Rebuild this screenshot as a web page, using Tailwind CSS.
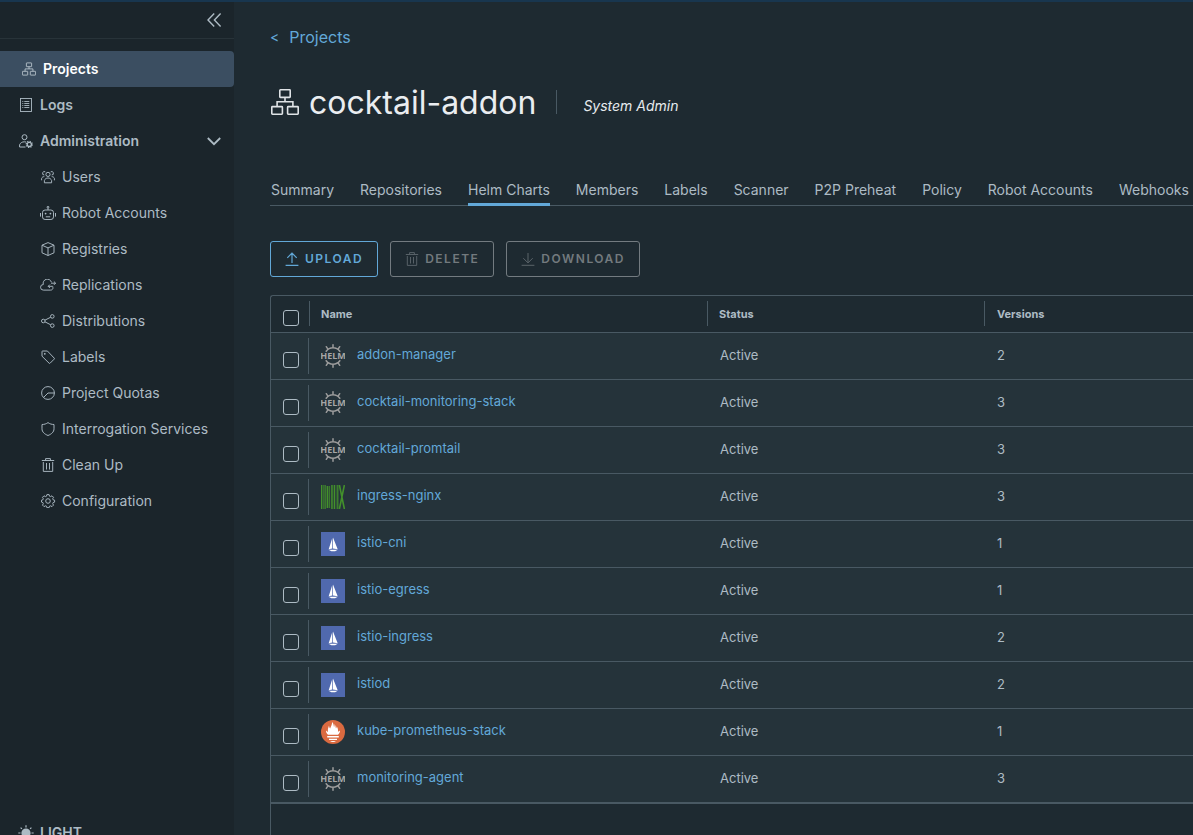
<!DOCTYPE html>
<html lang="en">
<head>
<meta charset="utf-8">
<title>cocktail-addon - Helm Charts</title>
<script src="https://cdn.jsdelivr.net/npm/@tailwindcss/browser@4"></script>
</head>
<body class="h-screen overflow-hidden bg-[#1e2a31] font-[Inter,sans-serif] text-sm text-[#adbbc4]">
<svg class="hidden" aria-hidden="true">
  <symbol id="org" viewBox="0 0 28 26"><g fill="none" stroke="currentColor" stroke-width="1.6"><rect x="8.8" y="0.8" width="10.4" height="7.6" rx=".6"/><rect x=".8" y="17.6" width="10.6" height="7.6" rx=".6"/><rect x="16.6" y="17.6" width="10.6" height="7.6" rx=".6"/><path d="M14 8.4v4.4M6.1 17.6v-4.8h15.8v4.8"/></g></symbol>
  <symbol id="logs" viewBox="0 0 14 14"><g fill="none" stroke="currentColor" stroke-width=".9"><rect x="1.5" y=".5" width="11" height="13"/><path d="M5.3 3.5h5M5.3 5.5h5M5.3 7.5h5M5.3 9.5h5M3.3 3.5h1M3.3 5.5h1M3.3 7.5h1M3.3 9.5h1"/></g></symbol>
  <symbol id="admin" viewBox="0 0 14 14"><g fill="none" stroke="currentColor"><circle cx="5.5" cy="3.2" r="2.5"/><path d="M6.5 13H.6v-2.2C1.4 8.9 3 7.8 5.4 7.8c.7 0 1.3.1 1.9.3"/><circle cx="10.3" cy="10.4" r="2.1" stroke-width="1.3"/><circle cx="10.3" cy="10.4" r="3.1" stroke-width="1.2" stroke-dasharray="1.2 1.23"/></g></symbol>
  <symbol id="users" viewBox="0 0 14 14"><g fill="none" stroke="currentColor" stroke-width=".95"><circle cx="7" cy="4.4" r="2.1"/><path d="M3.4 12.8v-2.3c.5-1.5 1.8-2.5 3.6-2.5s3.100 1 3.600 2.500v2.300z"/><path d="M4.300 1.900A1.700 1.700 0 1 0 3.300 5M9.700 1.900A1.700 1.700 0 1 1 10.700 5M.6 10.300V8.400c.3-1 1.200-1.700 2.700-1.800M13.400 10.300V8.400c-.3-1-1.200-1.700-2.700-1.800"/></g></symbol>
  <symbol id="robot" viewBox="0 0 16 14"><g fill="none" stroke="currentColor" stroke-width=".95"><rect x="2.500" y="4" width="11" height="9.500" rx="2.600"/><circle cx="8" cy="1.200" r=".9"/><path d="M8 2.100V4M.5 7v3.600M15.500 7v3.600M5.800 10.800h4.400"/></g><g fill="currentColor"><circle cx="5.600" cy="7.600" r=".9"/><circle cx="10.400" cy="7.600" r=".9"/></g></symbol>
  <symbol id="cube" viewBox="0 0 14 14"><path d="M7 .6l6 2.600v7.600l-6 2.700-6-2.700V3.200zM1 3.200l6 2.700 6-2.700M7 5.900v7.600" fill="none" stroke="currentColor" stroke-width=".95" stroke-linejoin="round"/></symbol>
  <symbol id="cloud" viewBox="0 0 16 12"><path d="M12.900 7.600v.9a2.200 2.200 0 0 1-2.300 2.600H3.400A2.800 2.800 0 0 1 3.300 5.500 4.200 4.200 0 0 1 11.400 3.200M15.600 4.200h-4.600M13.900 2.500l1.700 1.700-1.700 1.700M12.800 7.300H8.200M9.900 5.600L8.200 7.300l1.700 1.700" fill="none" stroke="currentColor" stroke-width=".95"/></symbol>
  <symbol id="share" viewBox="0 0 14 14"><g fill="none" stroke="currentColor" stroke-width=".95"><circle cx="2.300" cy="7" r="1.800"/><circle cx="11.300" cy="2.400" r="1.800"/><circle cx="11.300" cy="11.600" r="1.800"/><path d="M3.900 6.200l5.800-3M3.900 7.800l5.800 3"/></g></symbol>
  <symbol id="tag" viewBox="0 0 14 14"><path d="M1 1.600v4.600l7 6.900a.8.8 0 0 0 1.200 0l3.900-3.900a.8.8 0 0 0 0-1.200L6.400 1H1.600a.6.6 0 0 0-.6.600z" fill="none" stroke="currentColor" stroke-width=".95"/><circle cx="3.800" cy="3.800" r=".9" fill="currentColor"/></symbol>
  <symbol id="quota" viewBox="0 0 14 14"><g fill="none" stroke="currentColor" stroke-width=".95"><circle cx="7" cy="7" r="6.400"/><path d="M2.500 11.500L7 7h6.400"/></g></symbol>
  <symbol id="shield" viewBox="0 0 14 14"><path d="M7 .6c1.800 1.300 3.700 1.900 6 1.900v4.300c0 3.200-2.500 5.300-6 6.700-3.500-1.400-6-3.500-6-6.700V2.500c2.300 0 4.200-.6 6-1.900z" fill="none" stroke="currentColor" stroke-width=".95"/></symbol>
  <symbol id="trash" viewBox="0 0 14 14"><path d="M.8 2.500h12.400M4.600 2.300V.6h4.800v1.700M2.300 4v9.400h9.400V4M5.500 5v6.500M8.500 5v6.500" fill="none" stroke="currentColor" stroke-width=".95"/></symbol>
  <symbol id="gear" viewBox="0 0 14 14"><g fill="none" stroke="currentColor" stroke-width=".95"><circle cx="7" cy="7" r="2.300"/><path d="M5.900 .6h2.200l.4 1.600 1.100.4 1.400-.8 1.500 1.500-.8 1.400.4 1.100 1.500.4v1.900l-1.500.5-.4 1.100.8 1.400-1.500 1.500-1.400-.8-1.100.4-.4 1.500H5.900l-.4-1.500-1.100-.4-1.400.8-1.500-1.500.8-1.400-.4-1.100L.5 8.100V6.200l1.400-.4.400-1.100-.8-1.400L3 1.800l1.400.8 1.100-.4z" stroke-linejoin="round"/></g></symbol>
  <symbol id="sun" viewBox="0 0 16 16"><circle cx="8" cy="8" r="4.600" fill="currentColor"/><path d="M8 .3v2.200M8 13.500v2.200M.3 8h2.200M13.500 8h2.200M2.600 2.600l1.300 1.300M12.100 12.100l1.300 1.300M2.600 13.400l1.300-1.300M12.100 3.900l1.300-1.300" stroke="currentColor" stroke-width="1.200"/></symbol>
  <symbol id="up" viewBox="0 0 14 14"><path d="M7 11V1.200M2.300 5.800L7 1.100l4.700 4.700M.6 13.300h12.800" fill="none" stroke="currentColor" stroke-width="1.200"/></symbol>
  <symbol id="down" viewBox="0 0 14 14"><path d="M7 1v9.800M2.300 6.200L7 10.900l4.700-4.700M.6 13.300h12.800" fill="none" stroke="currentColor" stroke-width="1"/></symbol>
  <symbol id="helm" viewBox="0 0 24 24"><g fill="none" stroke="#9c9c9c" stroke-width="1.500" stroke-linecap="round"><path d="M5.200 7.300a8.400 8.400 0 0 1 13.600 0M5.200 16.700a8.400 8.400 0 0 0 13.600 0M12 3.600V.8M12 20.400v2.800M6.900 5.100L5.300 2.700M17.100 5.100l1.600-2.400M6.900 18.900l-1.600 2.400M17.100 18.900l1.600 2.400"/></g><text x="12" y="15.200" text-anchor="middle" font-family="Open Sans" font-weight="700" font-size="9" fill="#a6a6a6">HELM</text></symbol>
  <symbol id="nginx" viewBox="0 0 24 24"><g fill="#43912b"><rect width="1.400" height="24"/><rect x="2" width="1" height="24" opacity=".6"/><rect x="3.500" width="1.200" height="24"/><rect x="5.600" y="1" width="1.500" height="22"/><rect x="7.600" y="1" width="1.500" height="22" opacity=".75"/><rect x="10.200" width="1.500" height="24"/><rect x="12.700" width="1.300" height="24"/><rect x="14.600" width="1" height="24" opacity=".6"/><rect x="16.200" width="1.200" height="24"/></g><path d="M18.400 0l5 24M23.400 0l-5 24" stroke="#43912b" stroke-width="1.600"/></symbol>
  <symbol id="istio" viewBox="0 0 24 24"><path d="M0 0h24v24H0z" fill="#5069ae"/><path d="M11.300 6v10.500l-3.600.7zM12 5.500l4.700 11.700-4.700-.6zM7.500 17.700l9.200.1-2.600 1.500h-3.700z" fill="#fff"/></symbol>
  <symbol id="prom" viewBox="0 0 24 24"><circle cx="12" cy="12" r="12" fill="#da6a40"/><path d="M7 14.800C5.600 13.400 4.900 12.200 5 10.600c.8.900 1.400 1.200 2 1.200C6.500 9.200 7.400 7.500 8 5.500c.2 1.700.6 2.400 1.200 3C9.700 6.500 11 5 11.200 2c1.500 1.600 1.400 3.600 1.800 5 .5-.8.600-1.700.5-3 1.300 1.600 1 3.200 1.500 4.600.4-.6.700-1.300.8-2.300 1 2.100 1.500 3.700 1.200 5.500.7-.1 1.300-.4 2-1.200.1 1.500-.6 2.800-2 4.200zM6.200 15.900h11.600v1.700H6.200zM8 18.700h8v1.400H8zM9 21h6c-1.500 1.300-4.500 1.300-6 0z" fill="#fff"/></symbol>
</svg>
<div class="flex h-full border-t-2 border-[#18364f]">
  <aside class="flex w-[234px] shrink-0 flex-col bg-[#1b252b]">
    <div class="flex h-[37px] shrink-0 items-center justify-end border-b border-[#283339] pr-3">
      <button aria-label="Collapse navigation"><svg class="size-4" viewBox="0 0 16 16" fill="none" stroke="currentColor" stroke-width="1.400"><path d="M8.200 1.500L2 8l6.200 6.500M14.600 1.500L8.400 8l6.200 6.500"/></svg></button>
    </div>
    <nav class="mt-3 flex flex-col">
      <a href="#" class="flex h-9 items-center gap-[7px] rounded-r bg-[#3b4e61] pl-[22px] font-semibold text-white"><svg class="size-3.5 text-[#c5d0d8]"><use href="#org"/></svg>Projects</a>
      <a href="#" class="flex h-9 items-center gap-[7px] pl-[19px] font-semibold"><svg class="size-3.5"><use href="#logs"/></svg>Logs</a>
      <button class="flex h-9 items-center gap-[7px] pr-[13px] pl-[19px] font-semibold"><svg class="size-3.5"><use href="#admin"/></svg>Administration<svg class="ml-auto size-3.5" viewBox="0 0 14 14" fill="none" stroke="currentColor" stroke-width="1.800"><path d="M.8 4L7 10.200 13.200 4"/></svg></button>
      <a href="#" class="flex h-9 items-center gap-1.5 pl-10"><svg class="h-3.5 w-4"><use href="#users"/></svg>Users</a>
      <a href="#" class="flex h-9 items-center gap-1.5 pl-10"><svg class="h-3.5 w-4"><use href="#robot"/></svg>Robot Accounts</a>
      <a href="#" class="flex h-9 items-center gap-1.5 pl-10"><svg class="h-3.5 w-4"><use href="#cube"/></svg>Registries</a>
      <a href="#" class="flex h-9 items-center gap-1.5 pl-10"><svg class="h-3 w-4"><use href="#cloud"/></svg>Replications</a>
      <a href="#" class="flex h-9 items-center gap-1.5 pl-10"><svg class="h-3.5 w-4"><use href="#share"/></svg>Distributions</a>
      <a href="#" class="flex h-9 items-center gap-1.5 pl-10"><svg class="h-3.5 w-4"><use href="#tag"/></svg>Labels</a>
      <a href="#" class="flex h-9 items-center gap-1.5 pl-10"><svg class="h-3.5 w-4"><use href="#quota"/></svg>Project Quotas</a>
      <a href="#" class="flex h-9 items-center gap-1.5 pl-10"><svg class="h-3.5 w-4"><use href="#shield"/></svg>Interrogation Services</a>
      <a href="#" class="flex h-9 items-center gap-1.5 pl-10"><svg class="h-3.5 w-4"><use href="#trash"/></svg>Clean Up</a>
      <a href="#" class="flex h-9 items-center gap-1.5 pl-10"><svg class="h-3.5 w-4"><use href="#gear"/></svg>Configuration</a>
    </nav>
    <button class="mt-auto -mb-4 flex h-9 shrink-0 items-center gap-1.5 pl-[18px] font-semibold"><svg class="size-4"><use href="#sun"/></svg>LIGHT</button>
  </aside>
  <main class="flex min-w-0 flex-1 flex-col overflow-hidden pt-[23px] pl-9">
    <a href="#" class="flex items-center gap-2.5 text-base leading-6 text-[#62a8d8]"><span class="text-sm">&lt;</span>Projects</a>
    <header class="mt-[33px] flex h-10 items-center">
      <svg class="ml-px h-[26px] w-7 text-[#dfe3e6]"><use href="#org"/></svg>
      <h1 class="ml-2.5 pt-0.5 text-[32px] leading-10 text-[#eaedf0]">cocktail-addon</h1>
      <span class="ml-5 h-6 w-px bg-[#495963]"></span>
      <span class="ml-[26px] pt-2 text-sm text-[#e6eaed] italic">System Admin</span>
    </header>
    <nav class="mt-12 flex h-9 shrink-0 gap-[26px] border-b border-[#495963] pl-px whitespace-nowrap">
      <a href="#" class="h-9 leading-10">Summary</a>
      <a href="#" class="h-9 leading-10">Repositories</a>
      <a href="#" class="h-9 border-b-3 border-[#62a8d8] leading-10">Helm Charts</a>
      <a href="#" class="h-9 leading-10">Members</a>
      <a href="#" class="h-9 leading-10">Labels</a>
      <a href="#" class="h-9 leading-10">Scanner</a>
      <a href="#" class="h-9 leading-10">P2P Preheat</a>
      <a href="#" class="h-9 leading-10">Policy</a>
      <a href="#" class="h-9 leading-10">Robot Accounts</a>
      <a href="#" class="h-9 leading-10">Webhooks</a>
    </nav>
    <div class="mt-[35px] flex gap-3 text-xs font-semibold tracking-[1.500px]">
      <button class="flex h-9 items-center gap-1.5 rounded-[3px] border border-[#62a8d8] px-3.5 text-[#62a8d8]"><svg class="size-3.5"><use href="#up"/></svg>UPLOAD</button>
      <button disabled class="flex h-9 items-center gap-1.5 rounded-[3px] border border-[#737b80] px-3.5 text-[#737a7e]"><svg class="size-3.5 text-[#5b646a]"><use href="#trash"/></svg>DELETE</button>
      <button disabled class="flex h-9 items-center gap-1.5 rounded-[3px] border border-[#737b80] px-3.5 text-[#737a7e]"><svg class="size-3.5 text-[#5b646a]"><use href="#down"/></svg>DOWNLOAD</button>
    </div>
    <div class="mt-[18px] flex-1 rounded-tl-[3px] border-t border-l border-[#495963]">
      <table class="w-full table-fixed border-collapse text-left text-[13px]">
        <thead>
          <tr class="h-9 border-b border-[#495963] text-[11px]">
            <th class="w-[38px] p-0"><input type="checkbox" aria-label="Select all charts" class="mt-2 ml-3 block size-4 appearance-none rounded-[3px] border border-[#adbbc4]"></th>
            <th class="w-[398px] p-0"><div class="flex h-[25px] items-center border-l border-[#495963] pt-0.5 pl-[11px]">Name</div></th>
            <th class="w-[277px] p-0"><div class="flex h-[25px] items-center border-l border-[#495963] pt-0.5 pl-[11px]">Status</div></th>
            <th class="p-0"><div class="flex h-[25px] items-center border-l border-[#495963] pt-0.5 pl-3">Versions</div></th>
          </tr>
        </thead>
        <tbody id="charts" class="bg-[#25333a]"></tbody>
      </table>
    </div>
  </main>
</div>
<script>
const charts = [
  ['addon-manager', 'helm', 2], ['cocktail-monitoring-stack', 'helm', 3], ['cocktail-promtail', 'helm', 3],
  ['ingress-nginx', 'nginx', 3], ['istio-cni', 'istio', 1], ['istio-egress', 'istio', 1],
  ['istio-ingress', 'istio', 2], ['istiod', 'istio', 2], ['kube-prometheus-stack', 'prom', 1], ['monitoring-agent', 'helm', 3]
];
document.getElementById('charts').innerHTML = charts.map(([name, icon, versions]) => `
  <tr class="h-[47px] border-b border-[#495963] last:h-12 last:border-b-2">
    <td class="p-0"><div class="flex h-9 items-center border-r border-[#495963] pt-2 pl-3"><input type="checkbox" aria-label="Select ${name}" class="size-4 appearance-none rounded-[3px] border border-[#adbbc4]"></div></td>
    <td class="p-0"><div class="flex items-center gap-3 pl-3"><svg class="size-6"><use href="#${icon}"/></svg><a href="#" class="pb-0.5 text-[#62a8d8]">${name}</a></div></td>
    <td class="p-0 pl-[13px]">Active</td>
    <td class="p-0 pl-[13px]">${versions}</td>
  </tr>`).join('');
</script>
</body>
</html>
